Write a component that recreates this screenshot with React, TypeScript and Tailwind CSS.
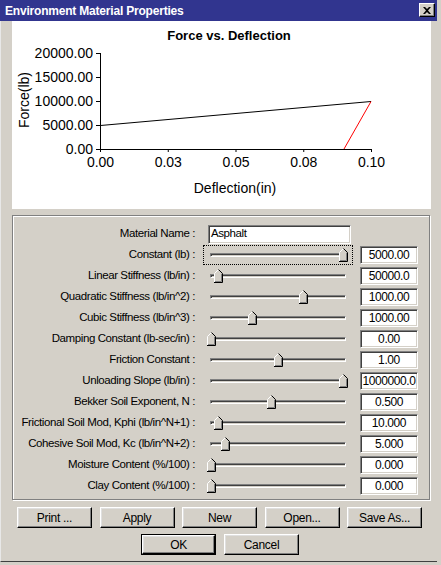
import React from 'react';

// Slider rows: position is 0..1 along the track
const rows = [
    { label: 'Constant (lb) :', pos: 1, value: '5000.00', focused: true },
    { label: 'Linear Stiffness (lb/in) :', pos: 0.053, value: '50000.0' },
    { label: 'Quadratic Stiffness (lb/in^2) :', pos: 0.697, value: '1000.00' },
    { label: 'Cubic Stiffness (lb/in^3) :', pos: 0.31, value: '1000.00' },
    { label: 'Damping Constant (lb-sec/in) :', pos: 0, value: '0.00' },
    { label: 'Friction Constant :', pos: 0.51, value: '1.00' },
    { label: 'Unloading Slope (lb/in) :', pos: 1, value: '1000000.0' },
    { label: 'Bekker Soil Exponent, N :', pos: 0.455, value: '0.500' },
    { label: 'Frictional Soil Mod, Kphi (lb/in^N+1) :', pos: 0.053, value: '10.000' },
    { label: 'Cohesive Soil Mod, Kc (lb/in^N+2) :', pos: 0.106, value: '5.000' },
    { label: 'Moisture Content (%/100) :', pos: 0, value: '0.000' },
    { label: 'Clay Content (%/100) :', pos: 0, value: '0.000' },
];

const font = "font-['Liberation_Sans',Arial,sans-serif]";

const sunken =
    'border border-t-[#808080] border-l-[#808080] border-b-white border-r-white shadow-[inset_1px_1px_0_#404040,inset_-1px_-1px_0_#d4d0c8] bg-white';

const Thumb = () => (
    <svg width="9" height="14" viewBox="0 0 9 14" className="block">
        <polygon points="0.5,13.5 0.5,4.5 4.5,0.5 8.5,4.5 8.5,13.5" fill="#d4d0c8" />
        <polyline points="0.5,13 0.5,4.5 4.5,0.5" fill="none" stroke="#fff" strokeWidth="1" />
        <polyline points="4.5,0.5 8.5,4.5 8.5,13.5 0,13.5" fill="none" stroke="#000" strokeWidth="1" />
        <polyline points="7.5,4.8 7.5,12.5 1,12.5" fill="none" stroke="#808080" strokeWidth="1" />
    </svg>
);

const Slider = ({ pos, focused }: { pos: number; focused?: boolean }) => (
    <div
        className={`relative w-[150px] h-[20px] border ${
            focused ? 'border-dotted border-black' : 'border-transparent'
        }`}
    >
        <div className="absolute left-[6px] right-[6px] top-[7px] h-[4px] border border-t-[#808080] border-l-[#808080] border-b-white border-r-white shadow-[inset_1px_1px_0_#404040]" />
        <div className="absolute top-[2px]" style={{ left: 3 + pos * 132 }}>
            <Thumb />
        </div>
    </div>
);

const Button = ({ children, isDefault }: { children: React.ReactNode; isDefault?: boolean }) => (
    <div className={`w-[75px] h-[21px] ${isDefault ? 'border border-black' : ''}`}>
        <div className="w-full h-full flex items-center justify-center border border-t-white border-l-white border-b-black border-r-black shadow-[inset_-1px_-1px_0_#808080,inset_1px_1px_0_#dfdfdf] text-[12px] tracking-[-0.3px] text-black">
            {children}
        </div>
    </div>
);

const Chart = () => (
    <svg width="419" height="188" viewBox="0 0 419 188" className="block">
        <text x="217" y="19" textAnchor="middle" fontSize="13" fontWeight="bold" fontFamily="Liberation Sans, Arial, sans-serif" fill="#000">
            Force vs. Deflection
        </text>
        {/* y axis labels + ticks */}
        {['20000.00', '15000.00', '10000.00', '5000.00', '0.00'].map((t, i) => (
            <g key={t}>
                <line x1="84" x2="88" y1={32.5 + i * 24} y2={32.5 + i * 24} stroke="#000" />
                <text x="81" y={37 + i * 24} textAnchor="end" fontSize="14" fontFamily="Liberation Sans, Arial, sans-serif" fill="#000">
                    {t}
                </text>
            </g>
        ))}
        {/* x axis labels + ticks */}
        {['0.00', '0.03', '0.05', '0.08', '0.10'].map((t, i) => (
            <g key={t}>
                <line x1={88.5 + i * 67.75} x2={88.5 + i * 67.75} y1="128" y2="131" stroke="#000" />
                <text x={88.5 + i * 67.75} y="146" textAnchor="middle" fontSize="14" fontFamily="Liberation Sans, Arial, sans-serif" fill="#000">
                    {t}
                </text>
            </g>
        ))}
        <line x1="88.5" x2="88.5" y1="32" y2="128.5" stroke="#000" />
        <line x1="88" x2="359.5" y1="128.5" y2="128.5" stroke="#000" />
        <text x="223" y="172" textAnchor="middle" fontSize="14" fontFamily="Liberation Sans, Arial, sans-serif" fill="#000">
            Deflection(in)
        </text>
        <text
            x="0"
            y="0"
            transform="translate(17 79) rotate(-90)"
            textAnchor="middle"
            fontSize="14"
            fontFamily="Liberation Sans, Arial, sans-serif"
            fill="#000"
        >
            Force(lb)
        </text>
        <line x1="88.5" y1="104.5" x2="359" y2="80.5" stroke="#000" />
        <line x1="332" y1="128" x2="359" y2="80.5" stroke="#ff0000" />
    </svg>
);

export default function App() {
    return (
        <div className={`w-[441px] h-[565px] bg-[#d4d0c8] overflow-hidden ${font}`}>
            <div className="w-[437px] h-[562px] border-b border-[#404040] border-l border-l-[#e8e8e8] flex flex-col">
                {/* Title bar */}
                <div className="relative h-[21px] bg-[#31358f] flex items-center pl-[5px] -ml-px">
                    <span className="text-white font-bold text-[12px] tracking-[-0.2px]">
                        Environment Material Properties
                    </span>
                    <div className="absolute right-[2px] top-[3px] w-[16px] h-[14px] bg-[#d4d0c8] border border-t-white border-l-white border-b-black border-r-black shadow-[inset_-1px_-1px_0_#808080] flex items-center justify-center">
                        <svg width="8" height="7" viewBox="0 0 8 7">
                            <path d="M0 0h2l2 2 2-2h2L5 3.5 8 7H6L4 5 2 7H0l3-3.5z" fill="#000" />
                        </svg>
                    </div>
                </div>

                {/* Chart */}
                <div className="ml-[11px] w-[419px] h-[188px] bg-white">
                    <Chart />
                </div>

                {/* Properties group */}
                <div className="ml-[11px] mt-[6px] w-[418px] border border-[#808080] shadow-[inset_1px_1px_0_#fff,1px_1px_0_#fff] pt-[8px] pb-[3px] text-[11.5px] tracking-[-0.4px] text-black">
                    <div className="flex items-center h-[20px]">
                        <div className="w-[182px] text-right">Material Name :</div>
                        <div className={`ml-[13px] w-[143px] h-[19px] ${sunken} flex items-center pl-[2px]`}>
                            Asphalt
                        </div>
                    </div>
                    {rows.map((r) => (
                        <div key={r.label} className="flex items-center h-[21px]">
                            <div className="w-[182px] text-right whitespace-nowrap">{r.label}</div>
                            <div className="ml-[8px]">
                                <Slider pos={r.pos} focused={r.focused} />
                            </div>
                            <div className={`ml-[7px] w-[58px] h-[18px] ${sunken} flex items-center justify-center text-[12px]`}>
                                {r.value}
                            </div>
                        </div>
                    ))}
                </div>

                {/* Buttons */}
                <div className="mt-[7px] ml-[16px] flex gap-[7.5px]">
                    <Button>Print ...</Button>
                    <Button>Apply</Button>
                    <Button>New</Button>
                    <Button>Open...</Button>
                    <Button>Save As...</Button>
                </div>
                <div className="mt-[6px] ml-[140px] flex gap-[8px]">
                    <Button isDefault>OK</Button>
                    <Button>Cancel</Button>
                </div>
            </div>
        </div>
    );
}
